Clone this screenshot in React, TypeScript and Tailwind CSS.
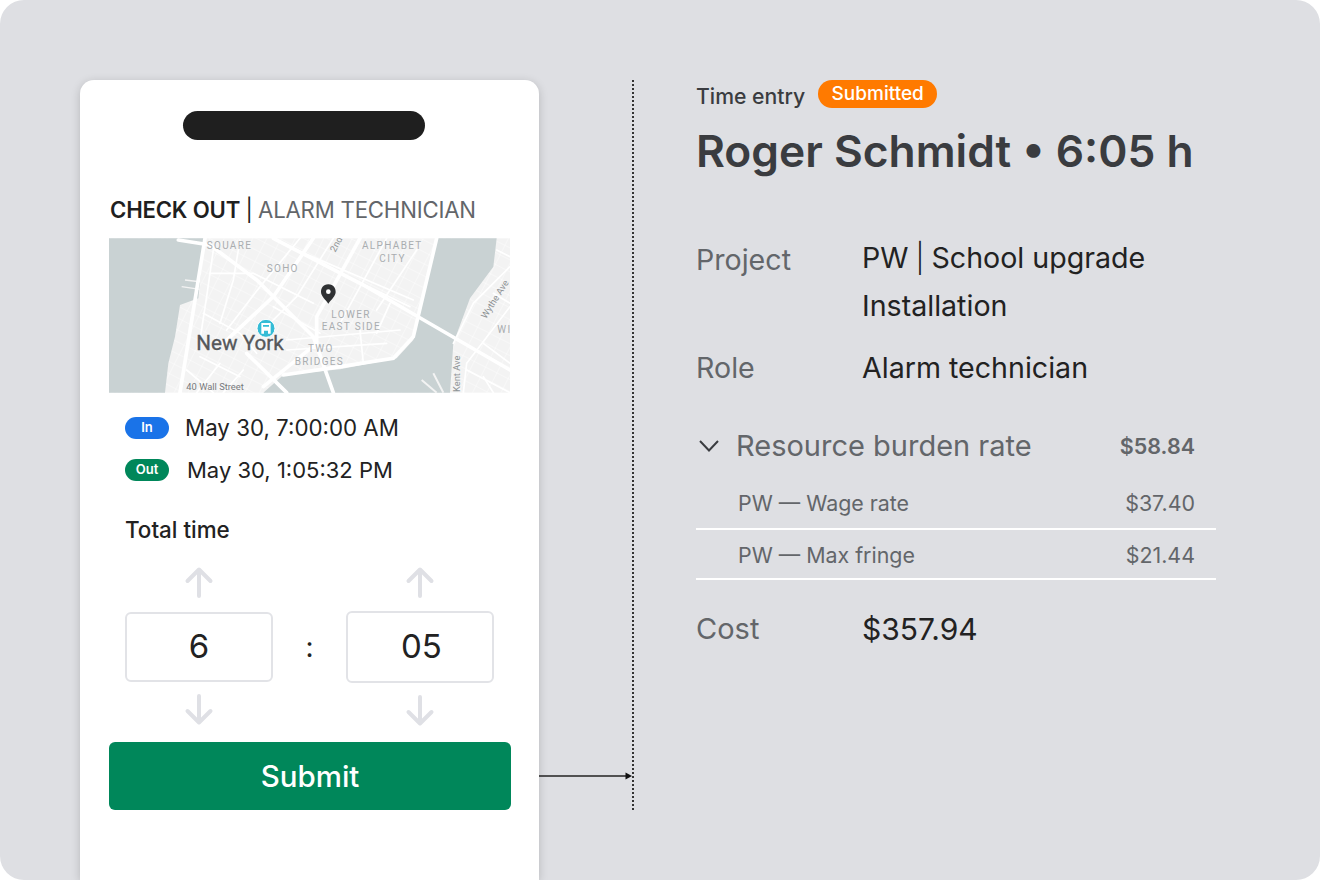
const font = { fontFamily: 'Inter, sans-serif' };

// major roads, in map coordinates
const bigRoads = [
  'M315 25 L240 488',
  'M520 25 L790 165 L1230 420',
  'M235 30 L330 45 L470 150 L640 320 L700 488',
  'M780 25 L650 260 L650 340 L490 470',
  'M640 25 L520 200 L370 340',
  'M550 435 L720 410 L880 385 L940 320 L1010 25',
  'M440 370 L560 488',
];

const smallRoads = [
  'M340 60 L320 200 L300 330',
  'M420 30 L400 150 L360 280',
  'M330 130 L460 130 L640 220',
  'M310 250 L420 310 L470 370',
  'M600 25 L480 170 L380 300',
  'M700 25 L590 200 L500 290',
  'M860 25 L720 280',
  'M950 60 L830 240',
  'M590 60 L940 210',
  'M660 100 L930 230',
  'M520 230 L660 310',
  'M560 330 L900 300',
  'M560 360 L860 340',
  'M780 300 L790 400',
  'M870 220 L830 310',
  'M300 380 L420 440',
  'M260 420 L340 488',
  'M360 400 L290 488',
  'M430 420 L370 488',
  'M1060 340 L1120 220 L1230 110',
  'M1090 488 L1100 400 L1230 230',
  'M1150 340 L1230 400',
  'M1100 420 L1230 488',
  'M1180 190 L1230 220',
  'M1190 60 L1230 80',
  'M1150 440 L1180 488',
];

function MapPanel() {
  return (
    <svg viewBox="27 25 1203 463" className="block w-[401px] h-[155px] ml-[29px] mt-[13px]">
      <defs>
        <pattern id="blocks" width="38" height="32" patternUnits="userSpaceOnUse" patternTransform="rotate(27)">
          <path d="M0 0 H38 M0 0 V32" stroke="#ffffff" strokeWidth="2.2" fill="none" />
        </pattern>
      </defs>
      <rect x="27" y="25" width="1203" height="463" fill="#f3f3f3" />
      <rect x="27" y="25" width="1203" height="463" fill="url(#blocks)" />
      <path d="M27 25 L315 25 L300 150 L295 205 L240 225 L225 320 L205 400 L195 488 L27 488 Z" fill="#c9d2d3" />
      <path d="M1010 25 L985 115 L965 230 L940 330 L890 385 L720 418 L550 435 L490 488 L1050 488 L1060 340 L1110 205 L1180 110 L1190 25 Z" fill="#c9d2d3" />
      <path d="M255 150 L305 156 M245 170 L300 178" stroke="#f3f3f3" strokeWidth="4" fill="none" />
      <path d="M1000 430 L1030 488 M965 450 L1010 488" stroke="#f3f3f3" strokeWidth="6" fill="none" />
      <g fill="none" stroke="#ffffff" strokeLinecap="round">
        {smallRoads.map(d => <path key={d} d={d} strokeWidth="5" />)}
        {bigRoads.map(d => <path key={d} d={d} strokeWidth="11" />)}
      </g>
      <g fill="#a9adb0" fontFamily="Roboto, sans-serif" fontSize="30" letterSpacing="4">
        <text x="320" y="58">SQUARE</text>
        <text x="500" y="127">SOHO</text>
        <text x="786" y="58">ALPHABET</text>
        <text x="838" y="96">CITY</text>
        <text x="694" y="263">LOWER</text>
        <text x="665" y="301">EAST SIDE</text>
        <text x="624" y="366">TWO</text>
        <text x="584" y="404">BRIDGES</text>
        <text x="1192" y="310">WI</text>
      </g>
      <g fill="#8f9396" fontFamily="Roboto, sans-serif" fontSize="28">
        <text x="0" y="0" transform="translate(706 68) rotate(-62)">2nd</text>
        <text x="0" y="0" transform="translate(1158 268) rotate(-58)">Wythe Ave</text>
        <text x="0" y="0" transform="translate(1080 486) rotate(-90)">Kent Ave</text>
      </g>
      <text x="259" y="480" fill="#77797c" fontFamily="Roboto, sans-serif" fontSize="28">40 Wall Street</text>
      <text x="289" y="361" fill="#55575a" stroke="#55575a" strokeWidth="1" fontFamily="Roboto, sans-serif" fontSize="62">New York</text>
      <circle cx="498" cy="295" r="27" fill="#35bcd6" stroke="#ffffff" strokeWidth="3" />
      <path d="M484 279 H512 V311 H504 V302 H492 V311 H484 Z M489 285 V290 H507 V285 Z" fill="#ffffff" fillRule="evenodd" />
      <path d="M685 163 C669 163 663 176 663 186 C663 198 677 210 685 221 C693 210 707 198 707 186 C707 176 701 163 685 163 Z" fill="#2f3133" />
      <circle cx="685" cy="185" r="7" fill="#ffffff" />
    </svg>
  );
}

function StepArrow({ down }: { down?: boolean }) {
  return (
    <svg viewBox="0 0 30 32" className={`block w-[30px] h-[32px] ${down ? 'rotate-180' : ''}`}>
      <path d="M15 30 V4 M3.5 15 L15 3.5 L26.5 15" fill="none" stroke="#dfe0e5" strokeWidth="4" strokeLinecap="round" strokeLinejoin="round" />
    </svg>
  );
}

function Stepper({ value, boxClass }: { value: string; boxClass: string }) {
  return (
    <div className="flex flex-col items-center w-[148px]">
      <StepArrow />
      <div className={`w-[148px] mb-[12px] bg-white border-2 border-[#e2e3e7] rounded-[6px] flex items-center justify-center text-[33px] text-[#222] ${boxClass}`}>
        {value}
      </div>
      <StepArrow down />
    </div>
  );
}

function PhoneCard() {
  return (
    <div className="w-[459px] h-[800px] bg-white rounded-t-[14px] shadow-[0_2px_10px_rgba(0,0,0,0.18)] shrink-0">
      <div className="w-[242px] h-[29px] ml-[103px] mt-[31px] rounded-full bg-[#1f1f1f]" />
      <div className="ml-[30px] mt-[55px] text-[22.2px] leading-[30px] tracking-[-0.2px] whitespace-nowrap">
        <span className="font-semibold text-[#1f1f1f]">CHECK OUT <span className="font-normal">|</span> </span>
        <span className="text-[#63666a]">ALARM TECHNICIAN</span>
      </div>
      <MapPanel />
      <div className="ml-[45px] mt-[20px] flex items-center gap-[16px] h-[30px]">
        <span className="w-[44px] h-[22px] rounded-full bg-[#1a73e8] text-white text-[13px] font-semibold flex items-center justify-center">In</span>
        <span className="text-[22.3px] text-[#222] whitespace-nowrap">May 30, 7:00:00 AM</span>
      </div>
      <div className="ml-[45px] mt-[12px] flex items-center gap-[18px] h-[30px]">
        <span className="w-[44px] h-[22px] rounded-full bg-[#00875a] text-white text-[13px] font-semibold flex items-center justify-center">Out</span>
        <span className="text-[22px] text-[#222] whitespace-nowrap">May 30, 1:05:32 PM</span>
      </div>
      <div className="ml-[45px] mt-[30px] text-[22.4px] leading-[30px] font-medium text-[#222]">Total time</div>
      <div className="ml-[45px] mt-[21px] flex items-start">
        <Stepper value="6" boxClass="h-[70px] mt-[14px]" />
        <span className="w-[73px] mt-[60px] text-center text-[28px] leading-[42px] text-[#222]">:</span>
        <Stepper value="05" boxClass="h-[72px] mt-[13px] pl-[3px]" />
      </div>
      <button className="block w-[402px] h-[68px] ml-[29px] mt-[15px] rounded-[6px] bg-[#00875a] text-white text-[29.5px] font-medium">
        Submit
      </button>
    </div>
  );
}

function Connector() {
  return (
    <div className="w-[95px] h-[730px] shrink-0 border-r-2 border-dotted border-[#333] flex flex-col justify-end pb-[29px]">
      <svg viewBox="0 0 93 10" className="block w-[93px] h-[10px]">
        <path d="M0 5 H88" stroke="#222" strokeWidth="1.3" />
        <path d="M86.5 1.5 L93 5 L86.5 8.5 Z" fill="#111" />
      </svg>
    </div>
  );
}

function Details() {
  return (
    <div className="ml-[62px] w-[520px]">
      <div className="flex items-center h-[28px]">
        <span className="text-[21.2px] font-medium text-[#3a3c40] mt-[5px]">Time entry</span>
        <span className="ml-[13px] w-[119px] h-[28px] rounded-full bg-[#ff7a00] text-white text-[19px] font-medium flex items-center justify-center">Submitted</span>
      </div>
      <div className="mt-[18px] text-[44.3px] leading-[50px] font-semibold text-[#3a3c40] whitespace-nowrap">Roger Schmidt • 6:05 h</div>

      <div className="mt-[58px] flex text-[28.6px] leading-[48px]">
        <div className="w-[166px] text-[#63666a] mt-[2px]">Project</div>
        <div className="text-[#222]">
          <div>PW <span className="-mx-[1px] font-light">|</span> School upgrade</div>
          <div>Installation</div>
        </div>
      </div>
      <div className="mt-[14px] flex text-[28.6px] leading-[48px]">
        <div className="w-[166px] text-[#63666a]">Role</div>
        <div className="text-[#222]">Alarm technician</div>
      </div>

      <div className="mt-[30px] flex items-center h-[48px]">
        <svg viewBox="0 0 22 14" className="block w-[22px] h-[14px] ml-[2px]">
          <path d="M2 2 L11 11.5 L20 2" fill="none" stroke="#3a3c40" strokeWidth="2" />
        </svg>
        <span className="ml-[16px] text-[29px] text-[#63666a]">Resource burden rate</span>
        <span className="ml-auto mr-[21px] text-[21.5px] font-semibold text-[#63666a]">$58.84</span>
      </div>
      <div className="mt-[10px] h-[50px] border-b-2 border-white pl-[42px] pr-[21px] pb-[2px] flex items-center justify-between text-[21.4px] text-[#63666a]">
        <span>PW — Wage rate</span>
        <span>$37.40</span>
      </div>
      <div className="h-[50px] border-b-2 border-white pl-[42px] pr-[21px] pt-[2px] flex items-center justify-between text-[21.4px] text-[#63666a]">
        <span>PW — Max fringe</span>
        <span>$21.44</span>
      </div>
      <div className="mt-[25px] flex leading-[48px]">
        <div className="w-[166px] text-[29px] text-[#63666a]">Cost</div>
        <div className="text-[30px] text-[#222]">$357.94</div>
      </div>
    </div>
  );
}

export default function App() {
  return (
    <div className="w-[1320px] h-[880px] bg-white overflow-hidden" style={font}>
      <div className="w-full h-full bg-[#dedfe3] rounded-[24px] pt-[80px] pl-[80px] flex items-start">
        <PhoneCard />
        <Connector />
        <Details />
      </div>
    </div>
  );
}
